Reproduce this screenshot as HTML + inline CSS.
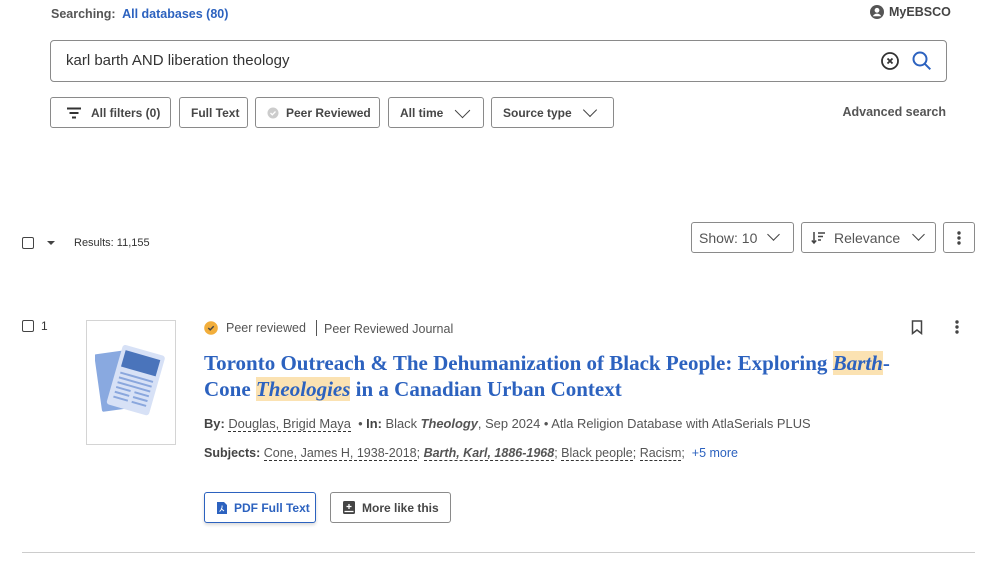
<!DOCTYPE html>
<html><head><meta charset="utf-8"><style>
*{box-sizing:border-box;margin:0;padding:0}
body{width:991px;height:564px;background:#fff;font-family:"Liberation Sans",sans-serif;color:#444;position:relative;overflow:hidden}
.a{position:absolute}
.btn{position:absolute;border:1px solid #8a8a8a;border-radius:3px;height:31px;font-size:12px;font-weight:bold;color:#464646;display:flex;align-items:center;padding-left:11px;background:#fff}
.chev{display:inline-block;width:9px;height:9px;border-right:1.6px solid #444;border-bottom:1.6px solid #444;transform:rotate(45deg);position:absolute;top:7px}
.cb{position:absolute;width:12px;height:12px;border:1.3px solid #444;border-radius:2px}
.blue{color:#2c62bf}
.u{border-bottom:1px dashed #333}
.hl{background:#fbe2b2;font-style:italic}
</style></head><body>
<div class="a" style="left:51px;top:7px;font-size:12.5px;font-weight:bold;color:#555">Searching:&nbsp; <span class="blue">All databases (80)</span></div>
<div class="a" style="left:870px;top:5px;font-size:12.5px;font-weight:bold;color:#444;display:flex;align-items:center">
<svg width="14" height="14" viewBox="0 0 14 14"><circle cx="7" cy="7" r="7" fill="#555"/><circle cx="7" cy="5.3" r="2.4" fill="#fff"/><path d="M2.8 11.2c1-1.8 2.5-2.6 4.2-2.6s3.2.8 4.2 2.6" fill="#fff"/></svg>
<span style="margin-left:5px">MyEBSCO</span></div>
<div class="a" style="left:50px;top:40px;width:897px;height:42px;border:1px solid #8a8a8a;border-radius:4px"></div>
<div class="a" style="left:66px;top:52px;font-size:15px;color:#333">karl barth AND liberation theology</div>
<svg class="a" style="left:880px;top:51px" width="20" height="20" viewBox="0 0 20 20"><circle cx="10" cy="10" r="8" fill="none" stroke="#333" stroke-width="1.8"/><path d="M7.5 7.5l5 5M12.5 7.5l-5 5" stroke="#333" stroke-width="1.8"/></svg>
<svg class="a" style="left:911px;top:50px" width="22" height="22" viewBox="0 0 22 22"><circle cx="9" cy="9" r="6.5" fill="none" stroke="#2c62bf" stroke-width="2"/><path d="M13.8 13.8l5.5 5.5" stroke="#2c62bf" stroke-width="2"/></svg>

<div class="btn" style="left:50px;top:97px;width:121px;padding-left:15px"><svg width="16" height="12" viewBox="0 0 16 12"><path d="M1 1.5h14M3.5 6h9M6 10.5h4" stroke="#333" stroke-width="2"/></svg><span style="margin-left:9px">All filters (0)</span></div>
<div class="btn" style="left:179px;top:97px;width:69px">Full Text</div>
<div class="btn" style="left:255px;top:97px;width:125px"><svg width="12" height="12" viewBox="0 0 12 12"><circle cx="6" cy="6" r="5.5" fill="#ccc"/><path d="M3.5 6l1.8 1.8 3.2-3.3" stroke="#fff" stroke-width="1.3" fill="none"/></svg><span style="margin-left:7px">Peer Reviewed</span></div>
<div class="btn" style="left:388px;top:97px;width:96px">All time<span class="chev" style="left:68px;top:7px;width:11px;height:11px"></span></div>
<div class="btn" style="left:491px;top:97px;width:123px">Source type<span class="chev" style="left:93px;top:7px;width:10px;height:10px"></span></div>
<div class="a" style="right:45px;top:105px;font-size:12.5px;font-weight:bold;color:#555">Advanced search</div>

<div class="cb" style="left:22px;top:237px"></div>
<div class="a" style="left:47px;top:241px;border-left:4px solid transparent;border-right:4px solid transparent;border-top:4px solid #444"></div>
<div class="a" style="left:74px;top:237px;font-size:11px;color:#333">Results: 11,155</div>
<div class="btn" style="left:691px;top:222px;width:103px;font-weight:normal;font-size:14px;color:#555;padding-left:7px">Show: 10<span class="chev" style="left:77px;top:7px"></span></div>
<div class="btn" style="left:801px;top:222px;width:135px;font-weight:normal;font-size:14px;color:#555;padding-left:9px"><svg width="16" height="14" viewBox="0 0 16 14"><path d="M3 1v11M0.8 9.5L3 12l2.2-2.5M7 2h7M7 5.5h5M7 9h3" stroke="#444" stroke-width="1.5" fill="none"/></svg><span style="margin-left:7px">Relevance</span><span class="chev" style="left:112px;top:7px"></span></div>
<div class="btn" style="left:943px;top:222px;width:32px;padding-left:0;justify-content:center"><svg width="4" height="14" viewBox="0 0 4 14"><circle cx="2" cy="2" r="1.7" fill="#444"/><circle cx="2" cy="7" r="1.7" fill="#444"/><circle cx="2" cy="12" r="1.7" fill="#444"/></svg></div>

<div class="cb" style="left:22px;top:320px"></div>
<div class="a" style="left:41px;top:319px;font-size:12px;color:#333">1</div>
<div class="a" style="left:86px;top:320px;width:90px;height:125px;border:1px solid #d4d4d4"></div>
<svg class="a" style="left:95px;top:345px" width="70" height="75" viewBox="0 0 70 75"><rect x="3" y="7" width="32" height="58" rx="2" fill="#89a9e0" transform="rotate(-8 19 36)"/><g transform="rotate(16 40 38)"><rect x="18" y="4" width="44" height="62" rx="3" fill="#d7e1f6"/><rect x="22" y="9" width="36" height="17" fill="#4a74bb"/><g stroke="#8aa7dd" stroke-width="2"><path d="M23 32h34M23 37h34M23 42h34M23 47h15M42 47h15M23 52h15M42 52h15M23 57h15M42 57h15"/></g></g></svg>

<svg class="a" style="left:204px;top:321px" width="14" height="14" viewBox="0 0 14 14"><circle cx="7" cy="7" r="6.8" fill="#f2ae3b"/><path d="M4.3 7l1.9 1.9 3.5-3.6" stroke="#444" stroke-width="1.4" fill="none"/></svg>
<div class="a" style="left:226px;top:321px;font-size:12.5px;color:#555">Peer reviewed</div>
<div class="a" style="left:316px;top:320px;width:1px;height:16px;background:#555"></div>
<div class="a" style="left:324px;top:322px;font-size:12.5px;color:#555">Peer Reviewed Journal</div>
<svg class="a" style="left:911px;top:320px" width="12" height="15" viewBox="0 0 12 15"><path d="M1.5 1h9v12.5L6 10l-4.5 3.5z" fill="none" stroke="#444" stroke-width="1.5"/></svg>
<svg class="a" style="left:955px;top:320px" width="4" height="14" viewBox="0 0 4 14"><circle cx="2" cy="2" r="1.7" fill="#444"/><circle cx="2" cy="7" r="1.7" fill="#444"/><circle cx="2" cy="12" r="1.7" fill="#444"/></svg>

<div class="a" style="left:204px;top:350px;width:760px;font-family:'Liberation Serif',serif;font-weight:bold;font-size:21px;line-height:26px;color:#2c62bf">Toronto Outreach &amp; The Dehumanization of Black People: Exploring <span class="hl">Barth</span>-<br>Cone <span class="hl">Theologies</span> in a Canadian Urban Context</div>

<div class="a" style="left:204px;top:416px;font-size:12.9px;color:#555;white-space:nowrap"><b style="color:#444">By:</b> <span class="u">Douglas, Brigid Maya</span> &nbsp;• <b style="color:#444">In:</b> Black <b><i>Theology</i></b>, Sep 2024 • Atla Religion Database with AtlaSerials PLUS</div>
<div class="a" style="left:204px;top:446px;font-size:12.5px;color:#555;white-space:nowrap"><b style="color:#444">Subjects:</b> <span class="u">Cone, James H, 1938-2018</span>; <span class="u"><b><i>Barth, Karl, 1886-1968</i></b></span>; <span class="u">Black people</span>; <span class="u">Racism</span>; &nbsp;<span class="blue">+5 more</span></div>

<div class="btn" style="left:204px;top:492px;width:112px;border-color:#2c62bf;color:#2c62bf;box-shadow:0 2px 3px rgba(0,0,0,.15);padding-left:12px"><svg width="10" height="12" viewBox="0 0 10 12"><path d="M0 0h7l3 3v9H0z" fill="#2c62bf"/><path d="M2.5 9.5c1.5-1 3-3.5 2.5-6M4 6.5l3 2.5" stroke="#fff" stroke-width="0.9" fill="none"/></svg><span style="margin-left:7px">PDF Full Text</span></div>
<div class="btn" style="left:330px;top:492px;width:121px;padding-left:12px"><svg width="12" height="13" viewBox="0 0 12 13"><rect x="0" y="0" width="12" height="13" rx="1.5" fill="#444"/><path d="M6 3v5M3.5 5.5h5M1.5 10.5h9" stroke="#fff" stroke-width="1.3"/></svg><span style="margin-left:7px">More like this</span></div>

<div class="a" style="left:22px;top:552px;width:953px;height:1px;background:#ccc"></div>
</body></html>
